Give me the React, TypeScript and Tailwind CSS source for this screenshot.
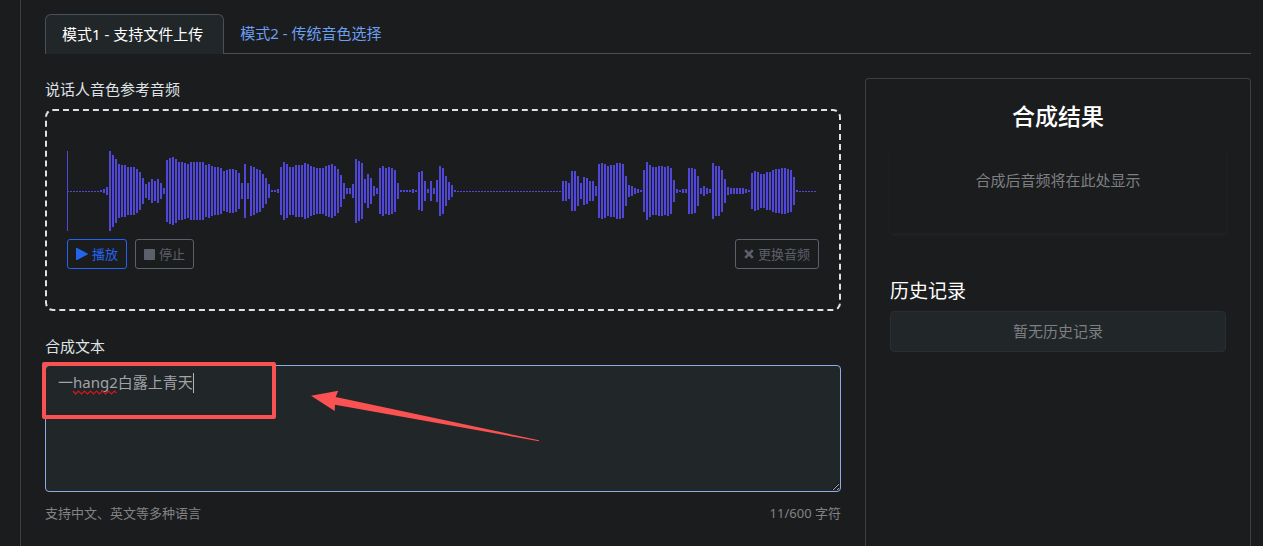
import { useState } from 'react';

// bar heights of the uploaded clip, in pixels
const PEAKS: number[] = [
    1, 1, 1, 1, 1, 1, 1, 1, 1, 1, 1, 2, 4, 8, 80, 72, 64, 54, 52, 52,
    48, 48, 48, 44, 38, 26, 14, 18, 24, 20, 24, 16, 6, 62, 66, 68, 64, 58, 58, 56,
    54, 58, 58, 58, 58, 58, 52, 54, 50, 48, 48, 46, 40, 42, 44, 44, 42, 36, 16, 54,
    16, 50, 48, 44, 42, 34, 26, 14, 2, 2, 4, 48, 58, 54, 48, 48, 52, 52, 52, 56,
    54, 50, 48, 46, 46, 46, 50, 52, 54, 50, 44, 32, 16, 6, 6, 14, 64, 60, 56, 24,
    34, 26, 10, 6, 46, 50, 46, 48, 46, 42, 16, 2, 2, 2, 2, 4, 2, 38, 40, 20,
    4, 20, 6, 22, 50, 46, 30, 18, 12, 2, 1, 1, 1, 1, 1, 1, 1, 1, 1, 1,
    1, 1, 1, 1, 1, 1, 1, 1, 1, 1, 1, 1, 1, 1, 1, 1, 1, 1, 1, 1,
    1, 1, 1, 1, 1, 20, 20, 16, 40, 40, 30, 16, 28, 26, 20, 20, 10, 54, 56, 54,
    50, 52, 52, 56, 56, 54, 30, 12, 10, 6, 4, 2, 42, 58, 52, 48, 48, 50, 50, 48,
    50, 46, 22, 4, 2, 4, 4, 46, 46, 44, 30, 6, 10, 6, 4, 56, 50, 50, 42, 24,
    8, 6, 6, 6, 6, 6, 4, 2, 36, 40, 38, 34, 34, 38, 38, 42, 44, 44, 46, 46,
    44, 42, 28, 2, 1, 1, 1, 1, 1, 1,
];

function Waveform() {
    return (
        <svg className="block h-20 w-full" viewBox="0 0 752 80" preserveAspectRatio="xMinYMid meet" shapeRendering="crispEdges">
            {PEAKS.map((h, i) => (
                <rect key={i} x={i * 3} y={40 - Math.floor(h / 2)} width={2} height={h} fill="#5046d8" />
            ))}
            <rect x={0} y={0} width={1} height={80} fill="#5046d8" />
        </svg>
    );
}

export default function App() {
    const [text, setText] = useState('一hang2白露上青天');

    return (
        <div className="min-h-screen bg-[#1b1c1e] pl-5 font-['Noto_Sans','Noto_Sans_CJK_SC',sans-serif] text-[15px] leading-[23px] text-[#dee2e6]">
            <main className="flex min-h-screen flex-col border-l border-[#3d3f43] pt-[14px] pr-3 pl-6">
                <nav className="flex border-b border-[#495057]">
                    <a href="#upload" className="-mb-px rounded-t-md border border-b-0 border-[#495057] bg-[#212628] py-2 pr-5 pl-4 text-white">模式1 - 支持文件上传</a>
                    <a href="#preset" className="px-4 py-2 text-[#6a9ff2]">模式2 - 传统音色选择</a>
                </nav>

                <div className="grid flex-1 grid-cols-3 gap-6 pt-6">
                    <section className="col-span-2">
                        <h2 className="mb-2">说话人音色参考音频</h2>
                        <div className="mb-6 rounded-lg border-2 border-dashed border-[#dee2e6] px-5 py-10">
                            <Waveform />
                            <div className="mt-2 flex gap-2 text-[13px] leading-5">
                                <button className="flex items-center gap-1 rounded-[3px] border border-[#2563eb] px-2 py-1 text-[#2563eb]">
                                    <svg className="h-3 w-3" viewBox="0 0 12 12" fill="currentColor">
                                        <path d="M0 0.3 Q0 -0.6 1 -0.1 L11.5 5.4 Q12.2 6 11.5 6.6 L1 12.1 Q0 12.6 0 11.7Z" />
                                    </svg>
                                    播放
                                </button>
                                <button className="flex items-center gap-1 rounded-[3px] border border-[#5c606b] px-2 py-1 text-[#5c606b]">
                                    <svg className="h-[11px] w-[11px]" viewBox="0 0 12 12" fill="currentColor">
                                        <rect width="12" height="12" rx="0.8" />
                                    </svg>
                                    停止
                                </button>
                                <button className="ml-auto flex items-center gap-1 rounded-[3px] border border-[#5c606b] px-2 py-1 text-[#5c606b]">
                                    <svg className="h-[10px] w-[10px]" viewBox="0 0 10 10" stroke="currentColor" strokeWidth="2.6">
                                        <path d="M1.2 1.2 L8.8 8.8 M8.8 1.2 L1.2 8.8" />
                                    </svg>
                                    更换音频
                                </button>
                            </div>
                        </div>

                        <label htmlFor="tts-text" className="mb-[7px] block">合成文本</label>
                        <div className="relative">
                            <textarea
                                id="tts-text"
                                rows={5}
                                spellCheck={false}
                                value={text}
                                onChange={(e) => setText(e.target.value)}
                                className="block w-full resize-y rounded-[4px] border border-[#8fabe3] bg-[#212628] px-3 py-[5px] text-[#a0a3a7] outline-none"
                            />
                            {/* spelling mark and caret */}
                            <svg className="pointer-events-none absolute top-0 left-0 h-10 w-40" viewBox="0 0 160 40" fill="none">
                                <path d="M28 26 l2.5 3 l3 -3 l3 3 l3 -3 l3 3 l3 -3 l3 3 l3 -3 l3 3 l3 -3 l3 3 l3 -3 l3 3 l3 -3 l2 2" stroke="#d3181f" strokeWidth="1.2" />
                                <path d="M148.5 8 V28" stroke="#b4b7ba" />
                            </svg>
                            <div className="pointer-events-none absolute -top-[3px] -left-[3px] h-[57px] w-[234px] rounded-[2px] border-4 border-[#fa5252]" />
                            <svg className="pointer-events-none absolute top-[25px] left-[266px] h-[52px] w-[229px]" viewBox="0 0 229 52" fill="#fa5252">
                                <path d="M0 5.7 L27.3 0.7 L24.7 7 L228 50.3 L228 51.3 L24 14.7 L23.7 21Z" />
                            </svg>
                        </div>
                        <div className="mt-3 flex justify-between text-[13px] leading-[18px] text-[#818386]">
                            <span>支持中文、英文等多种语言</span>
                            <span>11/600 字符</span>
                        </div>
                    </section>

                    <aside className="rounded-t-[4px] border border-b-0 border-[#3d3f43] p-6">
                        <h2 className="mb-4 text-center text-[23px] leading-[26px] font-medium text-white">合成结果</h2>
                        <div className="rounded-[4px] pt-6 pb-[41px] text-center text-[#7d7f82] shadow-[0_2px_4px_rgba(255,255,255,0.04)]">
                            合成后音频将在此处显示
                        </div>
                        <h3 className="mt-[46px] mb-2 text-[19px] leading-6 text-white">历史记录</h3>
                        <div className="rounded-[4px] border border-[#2a2d31] bg-[#212628] py-2 text-center text-[#7d7f82]">暂无历史记录</div>
                    </aside>
                </div>
            </main>
        </div>
    );
}
